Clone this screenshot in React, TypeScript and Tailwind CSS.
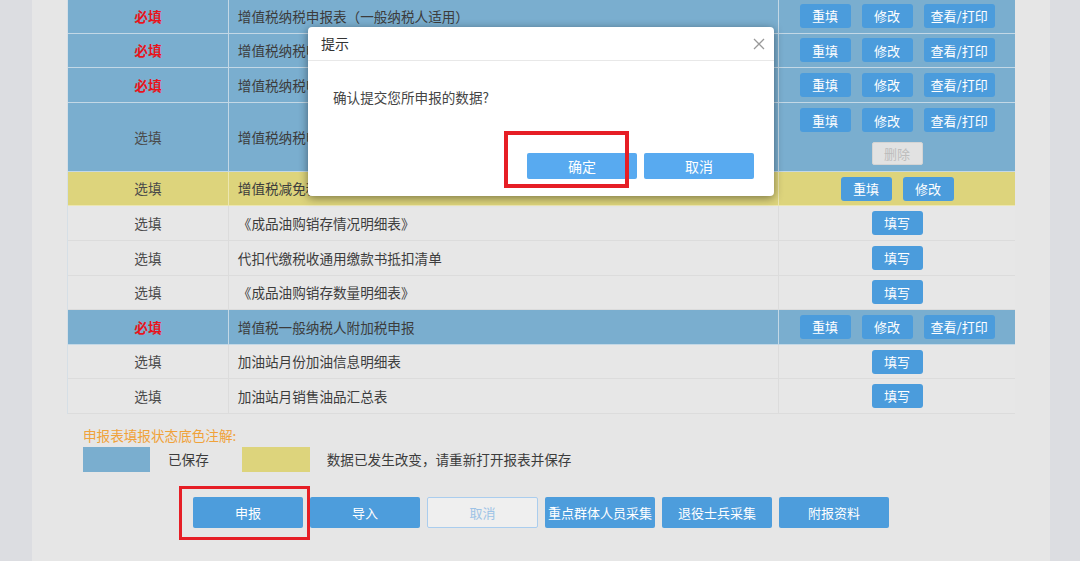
import React from "react";

type Row = {
  req: boolean;
  name: string;
  tone: "blue" | "yellow" | "plain";
  actions: string[];
  tall?: boolean;
};

const rows: Row[] = [
  { req: true, name: "增值税纳税申报表（一般纳税人适用）", tone: "blue", actions: ["重填", "修改", "查看/打印"] },
  { req: true, name: "增值税纳税申报表附列资料（一）", tone: "blue", actions: ["重填", "修改", "查看/打印"] },
  { req: true, name: "增值税纳税申报表附列资料（二）", tone: "blue", actions: ["重填", "修改", "查看/打印"] },
  { req: false, name: "增值税纳税申报表附列资料（三）", tone: "blue", actions: ["重填", "修改", "查看/打印"], tall: true },
  { req: false, name: "增值税减免税申报明细表", tone: "yellow", actions: ["重填", "修改"] },
  { req: false, name: "《成品油购销存情况明细表》", tone: "plain", actions: ["填写"] },
  { req: false, name: "代扣代缴税收通用缴款书抵扣清单", tone: "plain", actions: ["填写"] },
  { req: false, name: "《成品油购销存数量明细表》", tone: "plain", actions: ["填写"] },
  { req: true, name: "增值税一般纳税人附加税申报", tone: "blue", actions: ["重填", "修改", "查看/打印"] },
  { req: false, name: "加油站月份加油信息明细表", tone: "plain", actions: ["填写"] },
  { req: false, name: "加油站月销售油品汇总表", tone: "plain", actions: ["填写"] },
];

const toneBg = {
  blue: "bg-[#7aaecf] border-[#c3d8e6]",
  yellow: "bg-[#ddd47c] border-[#ece6b0]",
  plain: "bg-[#e7e7e7] border-[#dcdcdc]",
};

function TableButton({ label }: { label: string }) {
  return (
    <button
      className={
        "h-[24px] rounded-[3px] bg-[#4b9cdc] text-[13px] text-white " +
        (label === "查看/打印" ? "w-[71px]" : "w-[51px]")
      }
    >
      {label}
    </button>
  );
}

function TableRow({ row }: { row: Row }) {
  return (
    <div
      className={
        "flex border-b text-[13.6px] " +
        toneBg[row.tone] +
        (row.tall ? " h-[69px]" : " h-[34.6px]")
      }
    >
      {/* 必填 / 选填 */}
      <div
        className={
          "flex w-[161px] items-center justify-center border-r border-inherit " +
          (row.req ? "font-bold text-[#e8141c]" : "text-[#4a4a4a]")
        }
      >
        {row.req ? "必填" : "选填"}
      </div>

      {/* 报表名称 */}
      <div className="flex w-[551px] items-center border-r border-inherit pl-[9px] text-[#3c3c3c]">
        {row.name}
      </div>

      {/* 操作 */}
      <div className="flex w-[236px] flex-col items-center justify-center gap-[10px]">
        <div className="flex gap-[11px]">
          {row.actions.map((a) => (
            <TableButton key={a} label={a} />
          ))}
        </div>
        {row.tall && (
          <button className="h-[23px] w-[51px] rounded-[2px] border border-[#d4d4d4] bg-[#e2e2e2] text-[13px] text-[#bdbdbd]">
            删除
          </button>
        )}
      </div>
    </div>
  );
}

const bottomButtons = ["申报", "导入", "取消", "重点群体人员采集", "退役士兵采集", "附报资料"];

export default function App() {
  return (
    <div
      className="relative flex h-[561px] w-full overflow-hidden bg-[#dcdde1]"
      style={{ fontFamily: '"Noto Sans CJK SC", "Noto Sans", sans-serif' }}
    >
      {/* Main panel */}
      <div className="ml-[32px] flex h-full w-[1018px] flex-col bg-[#e6e6e6] pl-[35px]">
        {/* Table */}
        <div className="mt-[-1px] w-[948px] border-l border-[#d6dfe6]">
          {rows.map((row, i) => (
            <TableRow key={i} row={row} />
          ))}
        </div>

        {/* Legend */}
        <div className="mt-[13px] pl-[16px]">
          <p className="text-[13.6px] leading-[17px] text-[#f0a23a]">申报表填报状态底色注解:</p>
          <div className="mt-[3px] flex items-center text-[13.6px] text-[#3c3c3c]">
            <div className="h-[25px] w-[67px] bg-[#7aaecf]" />
            <span className="ml-[18px]">已保存</span>
            <div className="ml-[33px] h-[25px] w-[68px] bg-[#ddd47c]" />
            <span className="ml-[17px]">数据已发生改变，请重新打开报表并保存</span>
          </div>
        </div>

        {/* Bottom actions */}
        <div className="ml-[126px] mt-[25px] flex gap-[7px]">
          {bottomButtons.map((b) =>
            b === "取消" ? (
              <button
                key={b}
                className="h-[31px] w-[111px] rounded-[2px] border-[1.5px] border-[#aacdee] bg-[#efefef] text-[13px] text-[#9ec3e6]"
              >
                {b}
              </button>
            ) : (
              <button
                key={b}
                className="h-[31px] w-[110px] rounded-[2px] bg-[#4d9ddc] text-[13px] text-white"
              >
                {b}
              </button>
            )
          )}
        </div>
      </div>

      {/* Confirm dialog */}
      <div className="absolute left-[308px] top-[27px] flex h-[169px] w-[466px] flex-col rounded-[4px] bg-white shadow-[0_2px_10px_rgba(0,0,0,0.45)]">
        <div className="flex h-[34px] items-center justify-between border-b border-[#e8e8e8] pl-[13px] pr-[8px]">
          <span className="text-[14px] text-[#333]">提示</span>
          <svg width="14" height="14" viewBox="0 0 14 14" className="text-[#999]">
            <path d="M2 2 L12 12 M12 2 L2 12" stroke="currentColor" strokeWidth="1.3" fill="none" />
          </svg>
        </div>
        <div className="pl-[25px] pt-[27px] text-[13.6px] leading-[18px] text-[#444]">
          确认提交您所申报的数据?
        </div>
        <div className="mt-auto flex justify-end gap-[7px] pb-[17px] pr-[20px]">
          <button className="h-[26px] w-[110px] rounded-[2px] bg-[#58aaf0] text-[14px] text-white">确定</button>
          <button className="h-[26px] w-[110px] rounded-[2px] bg-[#58aaf0] text-[14px] text-white">取消</button>
        </div>
      </div>

      {/* Red annotation boxes */}
      <div className="absolute left-[504px] top-[131px] h-[57px] w-[125px] border-[4px] border-[#e61e25]" />
      <div className="absolute left-[179px] top-[486px] h-[54px] w-[131px] border-[3px] border-[#e61e25]" />
    </div>
  );
}
